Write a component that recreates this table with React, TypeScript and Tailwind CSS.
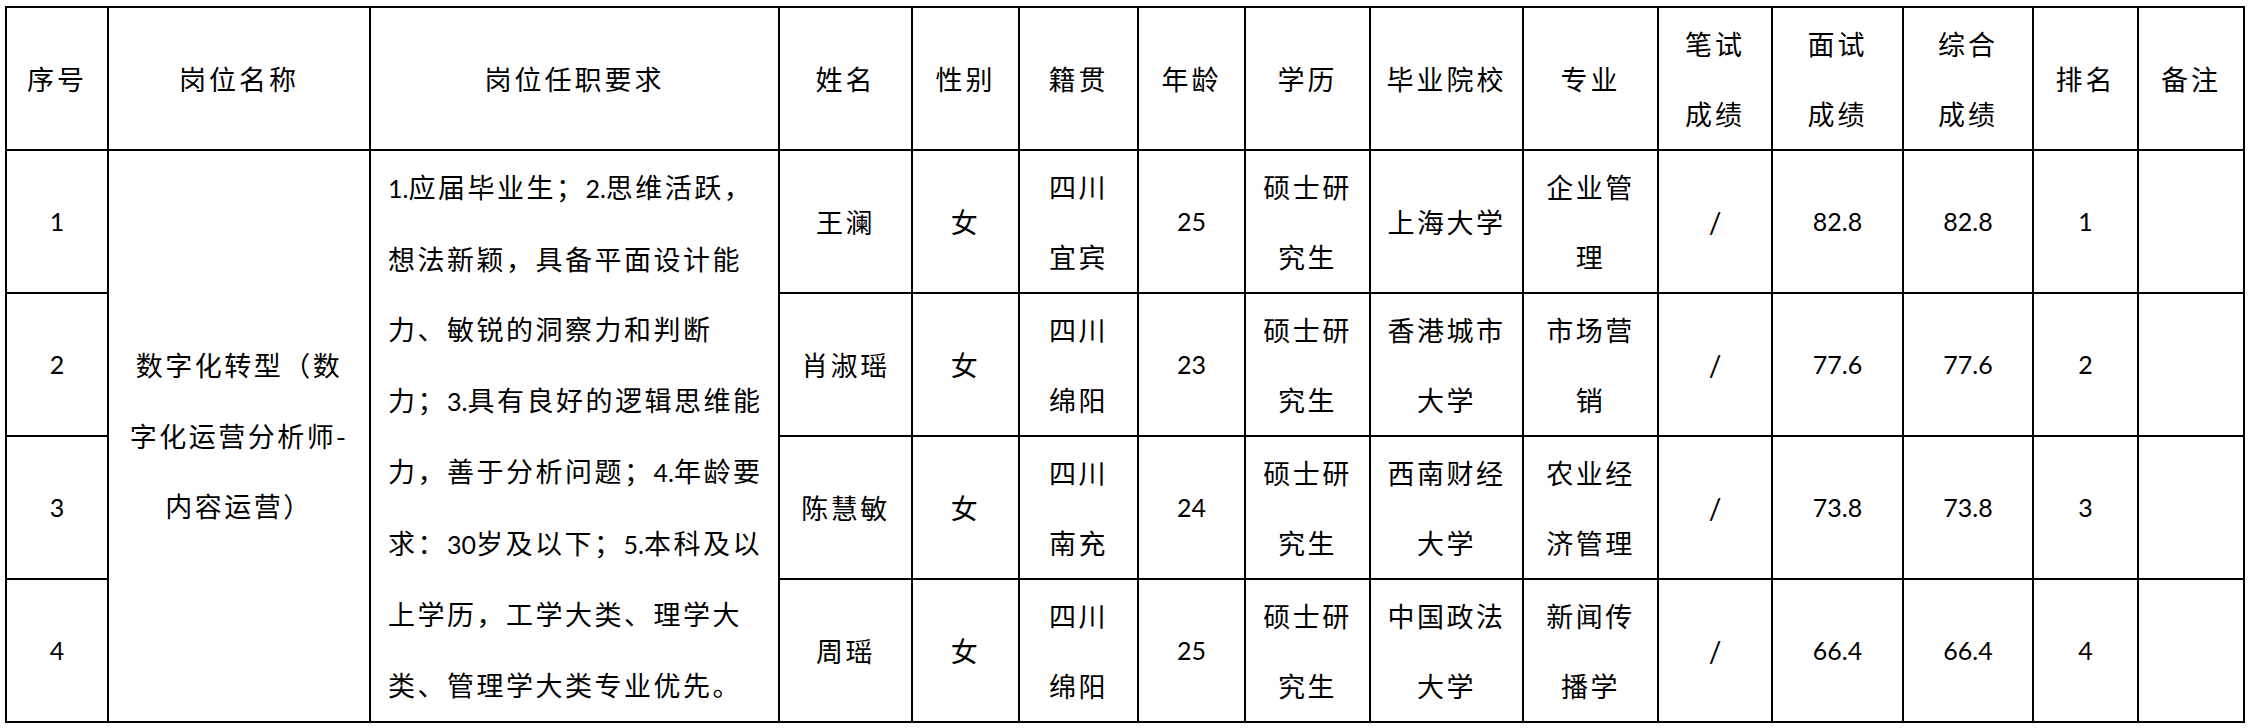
import React from 'react';

const cell = "border-2 border-black p-0 text-center align-middle font-normal";
const cjk = "font-['Noto_Sans_CJK_SC',sans-serif] text-[27px] tracking-[2.5px]";
const num = "font-['Lato','Noto_Sans_CJK_SC',sans-serif] text-[25px] tracking-normal";

const widths = [102, 262, 409, 133, 107, 119, 107, 125, 153, 135, 114, 131, 130, 105, 106];

const headers: string[][] = [
    ['序号'],
    ['岗位名称'],
    ['岗位任职要求'],
    ['姓名'],
    ['性别'],
    ['籍贯'],
    ['年龄'],
    ['学历'],
    ['毕业院校'],
    ['专业'],
    ['笔试', '成绩'],
    ['面试', '成绩'],
    ['综合', '成绩'],
    ['排名'],
    ['备注'],
];

interface Person {
    no: string;
    name: string;
    gender: string;
    origin: string[];
    age: string;
    degree: string[];
    school: string[];
    major: string[];
    written: string;
    interview: string;
    total: string;
    rank: string;
}

const people: Person[] = [
    { no: '1', name: '王澜', gender: '女', origin: ['四川', '宜宾'], age: '25', degree: ['硕士研', '究生'], school: ['上海大学'], major: ['企业管', '理'], written: '/', interview: '82.8', total: '82.8', rank: '1' },
    { no: '2', name: '肖淑瑶', gender: '女', origin: ['四川', '绵阳'], age: '23', degree: ['硕士研', '究生'], school: ['香港城市', '大学'], major: ['市场营', '销'], written: '/', interview: '77.6', total: '77.6', rank: '2' },
    { no: '3', name: '陈慧敏', gender: '女', origin: ['四川', '南充'], age: '24', degree: ['硕士研', '究生'], school: ['西南财经', '大学'], major: ['农业经', '济管理'], written: '/', interview: '73.8', total: '73.8', rank: '3' },
    { no: '4', name: '周瑶', gender: '女', origin: ['四川', '绵阳'], age: '25', degree: ['硕士研', '究生'], school: ['中国政法', '大学'], major: ['新闻传', '播学'], written: '/', interview: '66.4', total: '66.4', rank: '4' },
];

function N({ children }: { children: React.ReactNode }) {
    return <span className={num}>{children}</span>;
}

// the requirement text, line by line as in the document
const requirement: React.ReactNode[] = [
    <><N>1.</N>应届毕业生；<N>2.</N>思维活跃，</>,
    <>想法新颖，具备平面设计能</>,
    <>力、敏锐的洞察力和判断</>,
    <>力；<N>3.</N>具有良好的逻辑思维能</>,
    <>力，善于分析问题；<N>4.</N>年龄要</>,
    <>求：<N>30</N>岁及以下；<N>5.</N>本科及以</>,
    <>上学历，工学大类、理学大</>,
    <>类、管理学大类专业优先。</>,
];

function Lines({ lines }: { lines: string[] }) {
    return (
        <div className={`${cjk} leading-[70px]`}>
            {lines.map((l) => (
                <div key={l}>{l}</div>
            ))}
        </div>
    );
}

export default function App() {
    return (
        <div className="min-h-screen bg-white pl-[5px] pt-[6px] text-black">
            <table className="table-fixed border-collapse border-2 border-black w-[2240px]">
                <colgroup>
                    {widths.map((w, i) => (
                        <col key={i} style={{ width: w }} />
                    ))}
                </colgroup>
                <thead>
                    <tr className="h-[143px]">
                        {headers.map((h) => (
                            <th key={h.join('')} className={cell}>
                                <div className={`${cjk} tracking-[3px] leading-[70px]`}>
                                    {h.map((t) => (
                                        <div key={t}>{t}</div>
                                    ))}
                                </div>
                            </th>
                        ))}
                    </tr>
                </thead>
                <tbody>
                    {people.map((p, i) => (
                        <tr key={p.no} className="h-[143px]">
                            <td className={cell}>
                                <span className={num}>{p.no}</span>
                            </td>
                            {i === 0 && (
                                <>
                                    <td rowSpan={4} className={cell}>
                                        <div className={`${cjk} leading-[70.5px]`}>
                                            <div>数字化转型（数</div>
                                            <div>字化运营分析师-</div>
                                            <div>内容运营）</div>
                                        </div>
                                    </td>
                                    <td rowSpan={4} className={`${cell} text-left pl-[17px]`}>
                                        <div className={`${cjk} leading-[70.5px] whitespace-nowrap`}>
                                            {requirement.map((l, k) => (
                                                <div key={k}>{l}</div>
                                            ))}
                                        </div>
                                    </td>
                                </>
                            )}
                            <td className={cell}>
                                <Lines lines={[p.name]} />
                            </td>
                            <td className={cell}>
                                <Lines lines={[p.gender]} />
                            </td>
                            <td className={cell}>
                                <Lines lines={p.origin} />
                            </td>
                            <td className={cell}>
                                <span className={num}>{p.age}</span>
                            </td>
                            <td className={cell}>
                                <Lines lines={p.degree} />
                            </td>
                            <td className={cell}>
                                <Lines lines={p.school} />
                            </td>
                            <td className={cell}>
                                <Lines lines={p.major} />
                            </td>
                            <td className={cell}>
                                <span className={`${num} text-[28px]`}>{p.written}</span>
                            </td>
                            <td className={cell}>
                                <span className={num}>{p.interview}</span>
                            </td>
                            <td className={cell}>
                                <span className={num}>{p.total}</span>
                            </td>
                            <td className={cell}>
                                <span className={num}>{p.rank}</span>
                            </td>
                            <td className={cell}></td>
                        </tr>
                    ))}
                </tbody>
            </table>
        </div>
    );
}
